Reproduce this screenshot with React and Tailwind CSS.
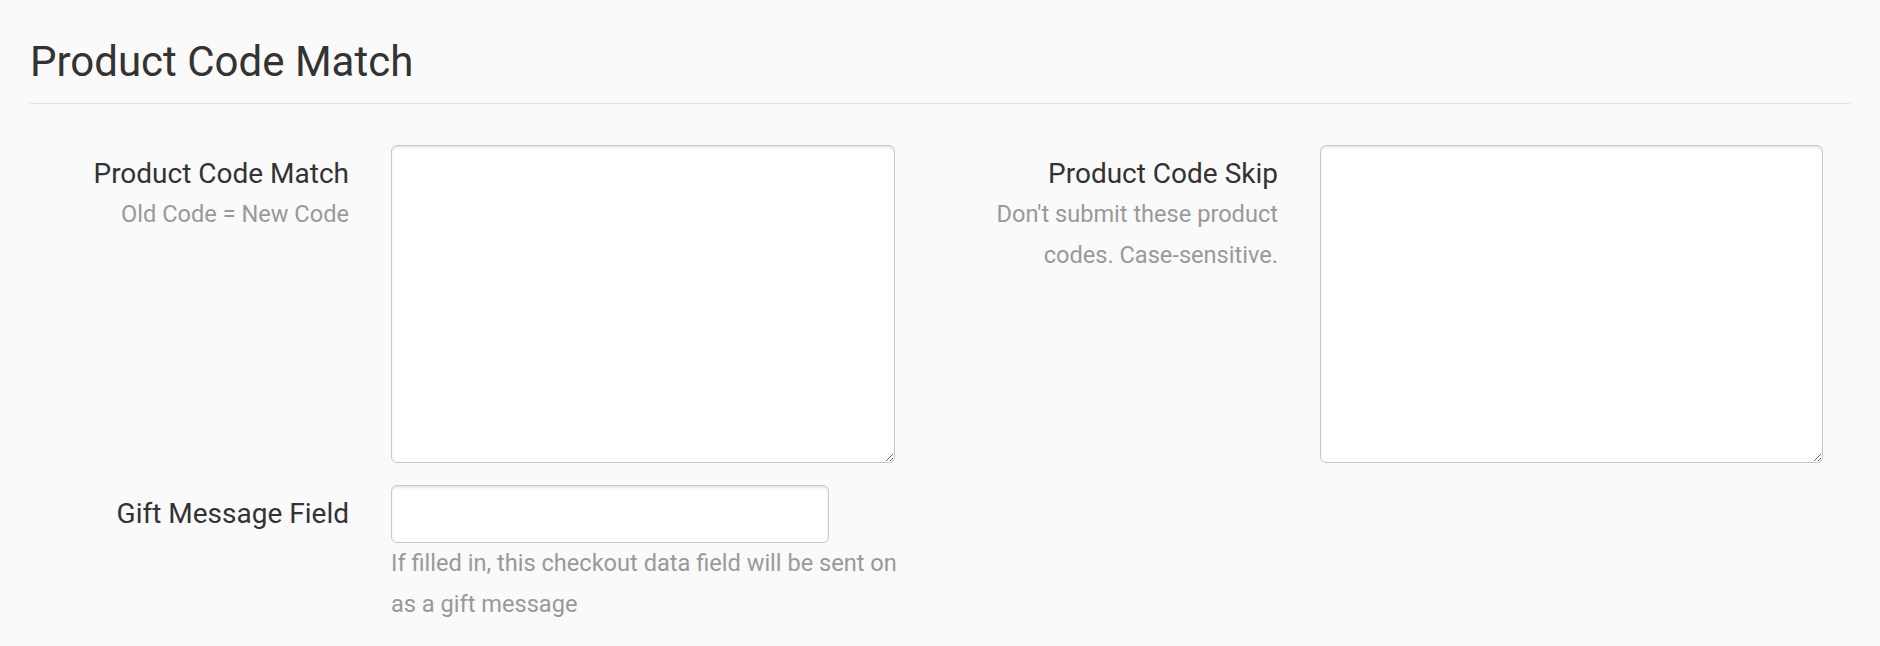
import React from 'react';

function FieldLabel({ label, help }) {
  return (
    <div className="w-[319px] shrink-0 pt-[9px] text-right">
      <div className="text-[28px] leading-[40px] text-[#333]">{label}</div>
      {help && <div className="text-[23.6px] leading-[41px] text-[#999]">{help}</div>}
    </div>
  );
}

function TextareaField({ label, help, width }) {
  return (
    <div className="flex gap-[42px]">
      <FieldLabel label={label} help={help} />
      <textarea
        className={`${width} h-[318px] shrink-0 resize rounded-[6px] border-[1.5px] border-[#c8c8c8] bg-white shadow-[inset_0_2px_2px_rgba(0,0,0,0.09)] outline-none`}
      />
    </div>
  );
}

export default function App() {
  return (
    <div className="min-h-screen bg-[#fafafa] px-[30px] pt-[39px] font-['Roboto','Liberation_Sans',sans-serif]">
      <h1 className="text-[42px] leading-[46px] font-normal text-[#333]">Product Code Match</h1>
      <div className="mt-[18px] border-t-[1.5px] border-[#e3e3e3]" />

      <div className="pt-[41px]">
        <div className="flex gap-[64px]">
          <TextareaField label="Product Code Match" help="Old Code = New Code" width="w-[504px]" />
          <TextareaField
            label="Product Code Skip"
            help="Don't submit these product codes. Case-sensitive."
            width="w-[503px]"
          />
        </div>

        <div className="mt-[22px] flex gap-[42px]">
          <FieldLabel label="Gift Message Field" />
          <div className="w-[525px]">
            <input
              type="text"
              className="block h-[58px] w-[438px] rounded-[6px] border-[1.5px] border-[#c8c8c8] bg-white px-3 shadow-[inset_0_2px_2px_rgba(0,0,0,0.09)] outline-none"
            />
            <p className="text-[23.6px] leading-[41px] text-[#999]">
              If filled in, this checkout data field will be sent on as a gift message
            </p>
          </div>
        </div>
      </div>
    </div>
  );
}
